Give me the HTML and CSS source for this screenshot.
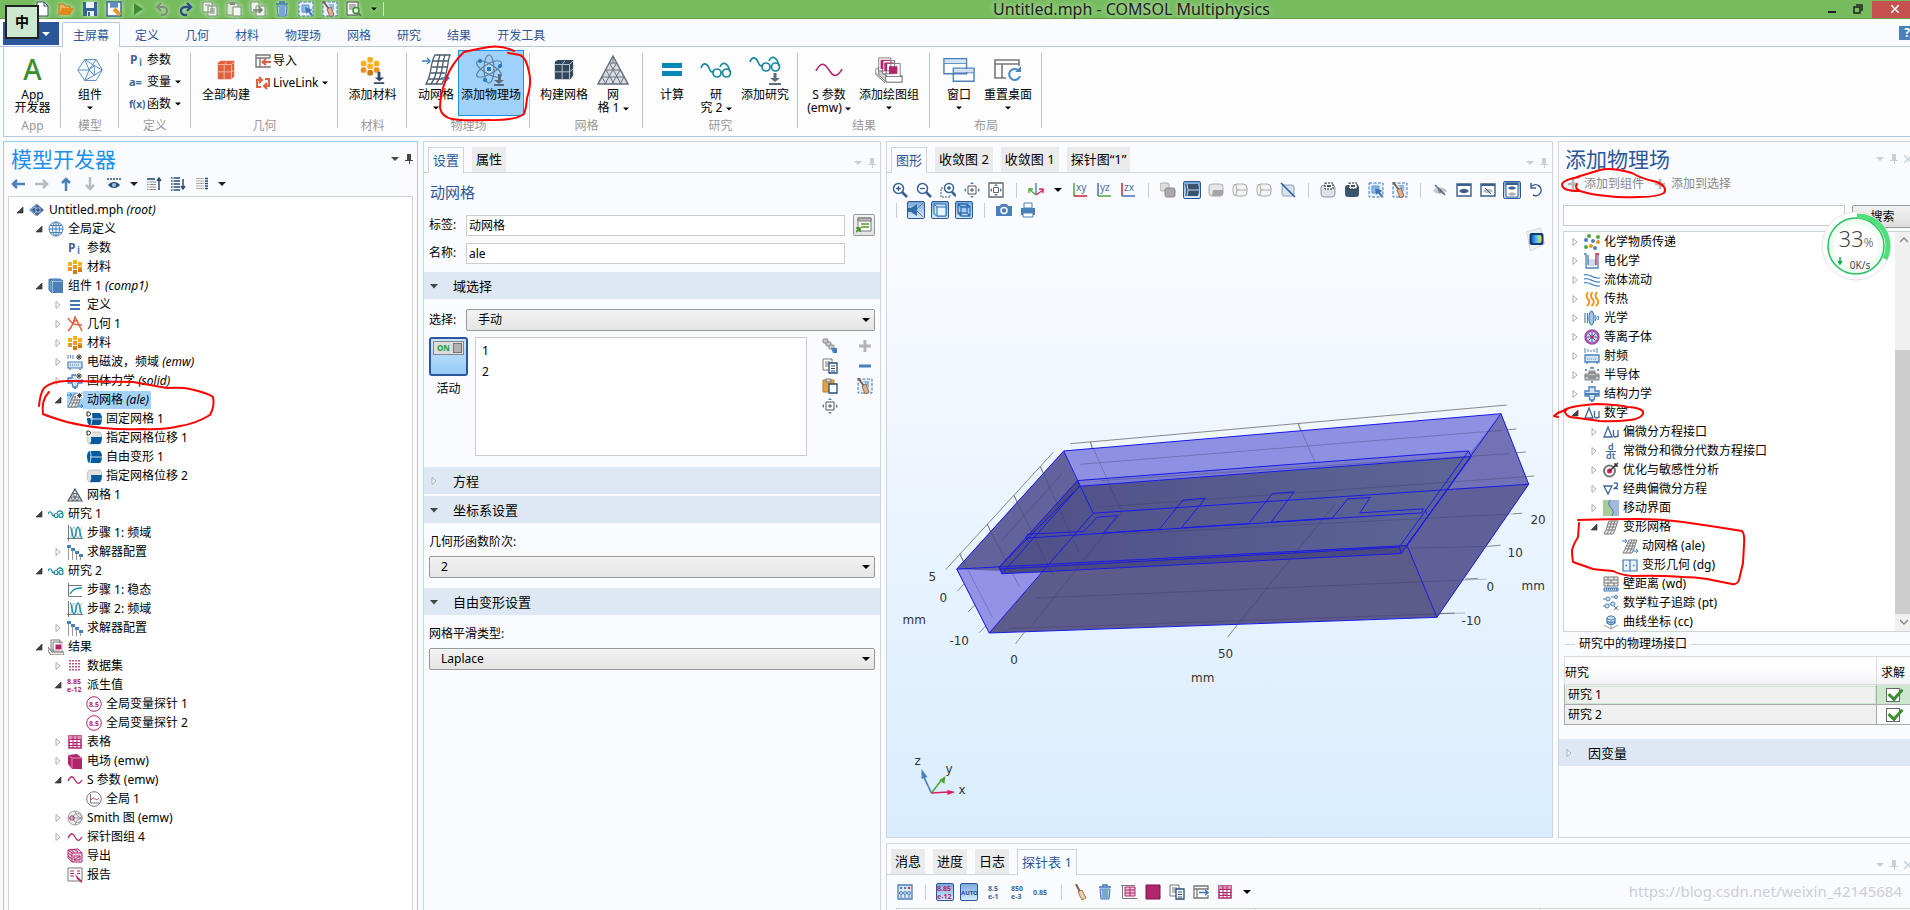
FILE: index.html
```html
<!DOCTYPE html>
<html lang="zh-CN">
<head>
<meta charset="utf-8">
<title>Untitled.mph - COMSOL Multiphysics</title>
<link rel="stylesheet" href="styles.css">
</head>
<body>
<svg class="sprite" aria-hidden="true">
  <!-- general -->
  <symbol id="caret" viewBox="0 0 8 8"><path d="M0 2h8L4 6z" fill="currentColor"/></symbol>
  <symbol id="pin" viewBox="0 0 8 10"><path d="M2 0h4v6h2v1H5v3H4V7H0V6h2z" fill="currentColor"/></symbol>
  <symbol id="cross" viewBox="0 0 8 8"><path d="M0 0l8 8M8 0L0 8" stroke="currentColor" stroke-width="1.5" fill="none"/></symbol>
  <symbol id="open" viewBox="0 0 12 12"><path d="M9 3v6H3z" fill="#444" stroke="#222" stroke-width=".6"/></symbol>
  <symbol id="shut" viewBox="0 0 12 12"><path d="M4 2.500v7l4-3.500z" fill="#fff" stroke="#aaa"/></symbol>
  <symbol id="down" viewBox="0 0 12 12"><path d="M2 4h8L6 8.500z" fill="#444"/></symbol>
  <symbol id="dl" viewBox="0 0 12 12"><path d="M4.500 0h3v5H11L6 9 1 5h3.500zM0 10h12v2H0z" fill="currentColor"/></symbol>
  <!-- quick access -->
  <symbol id="new" viewBox="0 0 16 16"><path d="M3 1h7l4 4v10H3z" fill="#fff" stroke="#35506f"/><path d="M10 1v4h4" fill="none" stroke="#35506f"/></symbol>
  <symbol id="folder" viewBox="0 0 16 16"><path d="M1 14V3h5l1 2h5v3" fill="#e8b25a" stroke="#b87414"/><path d="M1 14l3-7h12l-4 7z" fill="#e08a1e"/></symbol>
  <symbol id="save" viewBox="0 0 16 16"><path d="M1 1h14v14H1z" fill="#35649c"/><path d="M4 1h8v6H4zM5 10h7v5H5z" fill="#e9f1fa"/><path d="M6 11h2v4H6z" fill="#35649c"/></symbol>
  <symbol id="saveas" viewBox="0 0 16 16"><path d="M1 1h14v14H1z" fill="#fff" stroke="#35649c" stroke-width="1.500"/><path d="M4 2h8v5H4z" fill="#8fb4da"/><path d="M4 3h8M4 5h8" stroke="#35649c"/><path d="M8 8l6 6" stroke="#e39a2e" stroke-width="4"/></symbol>
  <symbol id="run" viewBox="0 0 16 16"><path d="M4 2v12l9-6z" fill="#3c8f30"/></symbol>
  <symbol id="undo" viewBox="0 0 16 16"><path d="M3 6h6a4 4 0 0 1 0 8H7M7 2L3 6l4 4" fill="none" stroke="#7d8c7d" stroke-width="2"/></symbol>
  <symbol id="redo" viewBox="0 0 16 16"><path d="M13 6H7a4 4 0 0 0 0 8h2M9 2l4 4-4 4" fill="none" stroke="#274e86" stroke-width="2.400"/></symbol>
  <symbol id="pages" viewBox="0 0 16 16"><path d="M1 1h9v10H1zM6 5h9v10H6z" fill="#eef6ea" stroke="#7f8f7a"/><path d="M8 8h5M8 10h5M8 12h5M3 4h5" stroke="#7f8f7a"/></symbol>
  <symbol id="pasteg" viewBox="0 0 16 16"><path d="M1 2h11v12H1z" fill="#dfe9da" stroke="#7f8f7a"/><path d="M4 1h5v3H4z" fill="#7f8f7a"/><path d="M7 6h8v9H7z" fill="#f4faf1" stroke="#7f8f7a"/></symbol>
  <symbol id="dup" viewBox="0 0 16 16"><path d="M1 1h8v10H1zM6 5h9v10H6z" fill="#eef6ea" stroke="#7f8f7a"/><path d="M3 9h9M9 6l3 3-3 3" fill="none" stroke="#6f7f6a" stroke-width="1.500"/></symbol>
  <symbol id="trash" viewBox="0 0 16 16"><path d="M2 3h12M6 3V1h4v2" fill="none" stroke="#3f76b5" stroke-width="1.500"/><path d="M3 5h10l-1 10H4z" fill="#b9d4ef" stroke="#3f76b5"/><path d="M6 6v8M8 6v8M10 6v8" stroke="#3f76b5"/></symbol>
  <symbol id="sel" viewBox="0 0 16 16"><path d="M1 1h14v14H1z" fill="#e9f2fb" stroke="#3f76b5" stroke-dasharray="3 1.500"/><path d="M4 4h7v7H4z" fill="#8bbbe6" stroke="#5b93cb"/><path d="M7 6l8 3-3 1 3 4-2 1-3-4-2 2z" fill="#3f76b5"/></symbol>
  <symbol id="desel" viewBox="0 0 16 16"><path d="M1 1h14v14H1z" fill="#e9f2fb" stroke="#3f76b5" stroke-dasharray="3 1.500"/><path d="M6 3h6v7z" fill="#8bbbe6"/><path d="M1 0l6 8" stroke="#7a6150" stroke-width="2"/><path d="M5 8l4-2 3 8-4 2z" fill="#e0b18d" stroke="#8b6a50"/></symbol>
  <symbol id="find" viewBox="0 0 16 16"><path d="M1 1h11v13H1z" fill="#fff" stroke="#444"/><path d="M3 4h7M3 6h7M3 8h4" stroke="#666"/><circle cx="10" cy="9.500" r="3" fill="#e3f5dc" stroke="#3c8f30" stroke-width="1.500"/><path d="M12 12l3 3" stroke="#3c8f30" stroke-width="2"/></symbol>
  <!-- ribbon large -->
  <symbol id="comp" viewBox="0 0 32 32"><path d="M2 16L10 4h13l7 12-7 12H10zM2 16h13l8-12M15 16L10 28M15 16L10 4M30 16l-9-5-6 5M30 16l-9 6-6-6M21 11L10 4M21 22L10 28M21 11V22" fill="#f2f8fe" stroke="#4a80ba"/></symbol>
  <symbol id="build" viewBox="0 0 24 24"><path d="M3 4l3-2h15v17l-3 3H3z" fill="#e0603f"/><path d="M3 6h15v16M3 14h15M10 6v16M18 6l3-3M18 14l3-2M10 6l3-3" stroke="#f6b9a6" fill="none"/></symbol>
  <symbol id="bmesh" viewBox="0 0 24 24"><path d="M2 3l3-2h17v17l-3 4H2z" fill="#33475b"/><path d="M2 6h16v16M2 14h16M10 6v16M18 6l4-4M18 14l4-3M10 6l3-4" stroke="#c2ccd6" fill="none"/></symbol>
  <symbol id="imp" viewBox="0 0 16 16"><path d="M15 13v1H1V2h14v3M1 5h14M5 5v9" fill="none" stroke="#777" stroke-width="1.400"/><path d="M16 9H9M11 6L7.500 9l3.500 3" fill="none" stroke="#e0603f" stroke-width="2"/></symbol>
  <symbol id="link" viewBox="0 0 16 16"><path d="M6 12H2V5h4M4 2l3 3-3 3M10 4h4v7h-4M12 8l-3 3 3 3" fill="none" stroke="#e0603f" stroke-width="2"/></symbol>
  <symbol id="mats" viewBox="0 0 16 16"><path d="M6 1h4v4H6zM1 3h4v4H1zM11 3h4v4h-4z" fill="#fbb01e"/><path d="M6 6h4v4H6zM1 8h4v4H1zM11 8h4v4h-4z" fill="#ee961d"/><path d="M6 11h4v4H6zM11 10h4v3h-4z" fill="#cf7a12"/></symbol>
  <symbol id="addmat" viewBox="0 0 28 30"><g fill="#fbb01e"><rect x="9" y="1" width="6" height="6" rx="2"/><rect x="2" y="5" width="6" height="6" rx="2"/><rect x="16" y="5" width="6" height="6" rx="2"/><rect x="9" y="8" width="6" height="6" rx="2"/></g><g fill="#f0921a"><rect x="2" y="12" width="6" height="6" rx="2"/><rect x="16" y="12" width="6" height="6" rx="2"/></g><rect x="9" y="15" width="6" height="6" rx="2" fill="#c97914"/><path d="M20 17h3v6h4l-5 4-5-4h3zM16 28h11v2H16z" fill="#2d4a63"/></symbol>
  <symbol id="ale" viewBox="0 0 28 32"><path d="M13 1h15c-3 6-1 16-8 29H4c7-12 3-18 9-29z" fill="#fff" stroke="#4a5a69" stroke-width="1.300"/><path d="M11 7h15M10 13h15M9 19h14M7 25h14M18 1c-4 10-1 18-9 29M23 1c-4 10-1 18-9 29" fill="none" stroke="#4a5a69" stroke-width="1.300"/><path d="M0 7h8M5 4l3 3-3 3M19 24h8M24 21l3 3-3 3" fill="none" stroke="#3b7fc4" stroke-width="1.300"/></symbol>
  <symbol id="atom" viewBox="0 0 32 32"><g fill="none" stroke="#5e7f9d" stroke-width="1.200"><ellipse cx="14" cy="15" rx="5" ry="14"/><ellipse cx="14" cy="15" rx="5" ry="14" transform="rotate(60 14 15)"/><ellipse cx="14" cy="15" rx="5" ry="14" transform="rotate(120 14 15)"/></g><circle cx="14" cy="15" r="3" fill="#1879c8" stroke="#fff"/><g fill="#1879c8"><circle cx="5" cy="7" r="2"/><circle cx="25" cy="12" r="2"/><circle cx="10" cy="26" r="2"/></g><path d="M23 20h3v6h3l-5 4-5-4h4zM19 30h10v2H19z" fill="#5b6b7b"/></symbol>
  <symbol id="tri" viewBox="0 0 32 30"><path d="M16 1l15 28H1z" fill="#d9dde1" stroke="#66717c" stroke-width="1.500"/><path d="M12.500 8h7M9 15h14M5 22h22M12.500 8L24 29M9 15l8 14M5 22l4 7M19.500 8L8 29M23 15l-8 14M27 22l-4 7M16 1v7" fill="none" stroke="#66717c"/></symbol>
  <symbol id="tri16" viewBox="0 0 16 16"><path d="M8 2l7 12H1z" fill="#d9dde1" stroke="#4d5964" stroke-width="1.200"/><path d="M5.500 6.500h5M3.500 10h9M5.500 6.500L10 14M3.500 10L6 14M10.500 6.500L6 14M12.500 10L10 14" fill="none" stroke="#4d5964" stroke-width=".8"/></symbol>
  <symbol id="eq" viewBox="0 0 20 14"><path d="M0 0h20v5H0zM0 8h20v5H0z" fill="#0089b5"/></symbol>
  <symbol id="gls" viewBox="0 0 32 18"><g fill="none" stroke="#17889b" stroke-width="1.700"><path d="M1 7c2-6 6-5 8 0s3 4 5 3M20 6c2-6 8-5 10 5"/><circle cx="17" cy="12" r="4"/><circle cx="26.500" cy="12" r="4"/></g></symbol>
  <symbol id="gls16" viewBox="0 0 16 16"><g fill="none" stroke="#17889b" stroke-width="1.200"><path d="M0 8c1-3 3-3 4 0s2 2 3 1M9 7c1-3 5-3 6 1"/><circle cx="8" cy="9.500" r="2"/><circle cx="13" cy="9.500" r="2"/></g></symbol>
  <symbol id="sine" viewBox="0 0 32 16"><path d="M1 9C7-2 11 0 16 8s9 9 15-1" fill="none" stroke="#b2256b" stroke-width="1.800"/></symbol>
  <symbol id="plots" viewBox="0 0 30 28"><path d="M0 14l4-3v8l8 8h17v-7H12L4 13M0 14v4l11 10" fill="#ccc" stroke="#777"/><g fill="#fff" stroke="#777"><path d="M4 1h13v14H4zM8 4h13v14H8zM12 7h15v15H12z"/></g><path d="M6 3h10v1H9v9H6zM10 6h10v1h-7v8h-3zM15 10h9v8h-9z" fill="#b2256b"/><path d="M11 21h18v6H12z" fill="#fff" stroke="#777"/></symbol>
  <symbol id="wins" viewBox="0 0 34 26"><path d="M1 1h24v16H1zM11 11h22v14H11z" fill="#fff" stroke="#4a80ba" stroke-width="1.500"/><path d="M2 2h22v3H2zM12 12h20v3H12z" fill="#d5e4f3"/><path d="M1 6h24M11 16h22" stroke="#4a80ba"/></symbol>
  <symbol id="reset" viewBox="0 0 28 24"><path d="M25 8V2H1v18h11M1 6h24M8 6v14" fill="#fff" stroke="#777" stroke-width="1.600"/><path d="M25 13a5.500 5.500 0 1 0 1 5" fill="none" stroke="#4a86c2" stroke-width="2"/><path d="M21 14h6V8z" fill="#4a86c2"/></symbol>
  <!-- tree toolbar -->
  <symbol id="left" viewBox="0 0 16 16"><path d="M15 8H3M7 4L3 8l4 4" fill="none" stroke="currentColor" stroke-width="2.500"/></symbol>
  <symbol id="right" viewBox="0 0 16 16"><path d="M1 8h12M9 4l4 4-4 4" fill="none" stroke="currentColor" stroke-width="2.500"/></symbol>
  <symbol id="up" viewBox="0 0 16 16"><path d="M8 15V3M4 7l4-4 4 4" fill="none" stroke="currentColor" stroke-width="2.500"/></symbol>
  <symbol id="dn" viewBox="0 0 16 16"><path d="M8 1v12M4 9l4 4 4-4" fill="none" stroke="currentColor" stroke-width="2.500"/></symbol>
  <symbol id="eyebar" viewBox="0 0 16 16"><path d="M1 3h14" stroke="#274e79" stroke-width="1.600" stroke-dasharray="2 1"/><path d="M2 9c3-4 9-4 12 0-3 4-9 4-12 0z" fill="#274e79"/><circle cx="8" cy="9" r="2" fill="#9cc4ea"/></symbol>
  <symbol id="listup" viewBox="0 0 16 16"><path d="M1 3h8" stroke="#274e79" stroke-width="1.600"/><path d="M1 6h9M1 8.500h9M1 11h9M1 13.500h9" stroke="#888" stroke-dasharray="1.500 1 8"/><path d="M13 14V3M11 5l2-3 2 3" fill="none" stroke="#274e79" stroke-width="1.500"/></symbol>
  <symbol id="listdn" viewBox="0 0 16 16"><path d="M1 2h9M1 5h9M1 8h9M1 11h9M1 14h9" stroke="#274e79" stroke-width="1.400" stroke-dasharray="1.500 1 8"/><path d="M13 3v10M11 10l2 3 2-3" fill="none" stroke="#274e79" stroke-width="1.500"/></symbol>
  <symbol id="listcol" viewBox="0 0 16 16"><path d="M2 2.500h8M2 5h8M2 7.500h8M2 10h8M2 12.500h8" stroke="#aaa" stroke-width="1.200"/><path d="M11 2.500h3M11 5h3M11 7.500h3M11 10h3M11 12.500h3" stroke="#274e79" stroke-width="1.500"/></symbol>
  <!-- tree -->
  <symbol id="root" viewBox="0 0 16 16"><path d="M1 8l7-6 7 6-7 6z" fill="#3f6496"/><path d="M0 8l7-6 1 1-5 5 5 5-1 1z" fill="#6f92bf"/><path d="M7 6h4v4H7zM7 6L5 5M7 10l-2 2" fill="#2f5080" stroke="#c9d9ec" stroke-width=".8"/></symbol>
  <symbol id="globe" viewBox="0 0 16 16"><g fill="#eef5fc" stroke="#4a80ba"><circle cx="8" cy="8" r="7"/><ellipse cx="8" cy="8" rx="3.500" ry="7"/><path d="M1 8h14M8 1v14M2 4.500h12M2 11.500h12"/></g></symbol>
  <symbol id="pi" viewBox="0 0 16 16"><text x="1" y="12" font-size="12" font-weight="700" fill="#3f6496">P</text><text x="10" y="14" font-size="10" font-weight="700" fill="#4a80ba">i</text></symbol>
  <symbol id="avar" viewBox="0 0 16 16"><text x="0" y="12" font-size="11" font-weight="700" fill="#3f6496">a=</text></symbol>
  <symbol id="fx" viewBox="0 0 16 16"><text x="0" y="12" font-size="10" font-weight="700" fill="#3f6496">f(x)</text></symbol>
  <symbol id="cube" viewBox="0 0 16 16"><path d="M1 1l3 3v11l-3-3zM2 1h10l3 2H5z" fill="#6b9bd0" stroke="#3f76b5"/><path d="M5 4h10v11H5z" fill="#4a80ba"/></symbol>
  <symbol id="defs3" viewBox="0 0 16 16"><path d="M3 4h10M3 8h10M3 12h10" stroke="#3f76b5" stroke-width="2"/></symbol>
  <symbol id="geom" viewBox="0 0 16 16"><path d="M1 2c4 7 8 7 14 7M1 15C5 11 7 6 8 1l7 14M6 5h5" fill="none" stroke="#e0603f" stroke-width="1.500"/></symbol>
  <symbol id="star" viewBox="0 0 16 16"><path d="M12 0v6M9 3h6M10 1l4 4M14 1l-4 4" stroke="#444"/></symbol>
  <symbol id="emw" viewBox="0 0 16 16"><path d="M1 1v4M3.500 1v3M6 1v4" stroke="#4a80ba"/><path d="M1 8h14v6H1zM3 14v2M13 14v2" fill="#d3e3f4" stroke="#4a80ba" stroke-width="1.200"/><path d="M3 11h10" stroke="#4a80ba" stroke-dasharray="1 1"/><path d="M12 0v6M9 3h6M10 1l4 4M14 1l-4 4" stroke="#444"/></symbol>
  <symbol id="struct" viewBox="0 0 16 16"><path d="M5 1h6v4h4v5h-4l-1 4H6l-1-4H1V5h4z" fill="#d3e3f4" stroke="#4a80ba" stroke-width="1.300"/><path d="M1 7h14v2H1zM7 14h2v2H7z" fill="#4a80ba"/></symbol>
  <symbol id="solid" viewBox="0 0 16 16"><path d="M5 2h5v3h5v5h-4l-1 4H6l-1-4H1V5h4z" fill="#d3e3f4" stroke="#4a80ba" stroke-width="1.300"/><path d="M1 7h14v2H1zM7 14h2v2H7z" fill="#4a80ba"/><path d="M9 0h7v6H9z" fill="#fff"/><path d="M12 0v6M9 3h6M10 1l4 4M14 1l-4 4" stroke="#444"/></symbol>
  <symbol id="dmesh" viewBox="0 0 16 16"><path d="M6 2h9c-2 4-2 8-5 13H1C4 10 4 6 6 2z" fill="#f2f2f2" stroke="#777"/><path d="M5 5h9M4 8h9M3 11h9M9 2C7 6 7 10 4 15M12 2c-2 4-2 8-5 13" fill="none" stroke="#777"/></symbol>
  <symbol id="amesh" viewBox="0 0 16 16"><path d="M7 2h8c-2 4-2 8-5 13H1C4 10 5 6 7 2z" fill="#f2f2f2" stroke="#777"/><path d="M6 5h8M5 8h8M3 11h9M10 2C8 6 7 10 4 15M12.500 2c-2 4-2 8-5 13" fill="none" stroke="#777"/><path d="M0 3h5M3 1l2 2-2 2M11 13h5M14 11l2 2-2 2" fill="none" stroke="#3b7fc4"/></symbol>
  <symbol id="amesh2" viewBox="0 0 16 16"><path d="M7 2h8c-2 4-2 8-5 13H1C4 10 5 6 7 2z" fill="#f2f2f2" stroke="#777"/><path d="M6 5h8M5 8h8M3 11h9M10 2C8 6 7 10 4 15M12.500 2c-2 4-2 8-5 13" fill="none" stroke="#777"/><path d="M0 3h5M3 1l2 2-2 2M11 14h5M14 12l2 2-2 2" fill="none" stroke="#3b7fc4"/><circle cx="12.500" cy="3.500" r="3.500" fill="#fff"/><path d="M12.500 1v5M10 3.500h5M10.500 1.500l4 4M14.500 1.500l-4 4" stroke="#444"/></symbol>
  <symbol id="cylb" viewBox="0 0 16 16"><path d="M3 2h11q2 2 2 6t-2 6H3Q1 12 1 8t2-6z" fill="#045a9a"/><path d="M4 8h12M4 2q2 3 0 12" fill="none" stroke="#cfe2f3"/></symbol>
  <symbol id="cylg" viewBox="0 0 16 16"><path d="M3 2h11q2 2 2 6t-2 6H3Q1 12 1 8t2-6z" fill="#e2e2e2" stroke="#aaa" stroke-width=".6"/><path d="M5 7h11q0 4-2 7H4q2-3 1-7z" fill="#045a9a"/></symbol>
  <symbol id="cylbd" viewBox="0 0 16 16"><path d="M3 2h11q2 2 2 6t-2 6H3Q1 12 1 8t2-6z" fill="#045a9a"/><path d="M4 8h12M5 2q2 3 0 12" fill="none" stroke="#cfe2f3"/><path d="M0 0h6v7H0z" fill="#fff"/><path d="M1 1h1.500q2 0 2 2t-2 2H1z" fill="none" stroke="#222"/></symbol>
  <symbol id="cylgd" viewBox="0 0 16 16"><path d="M3 2h11q2 2 2 6t-2 6H3Q1 12 1 8t2-6z" fill="#e2e2e2" stroke="#aaa" stroke-width=".6"/><path d="M5 7h11q0 4-2 7H4q2-3 1-7z" fill="#045a9a"/><path d="M0 0h6v7H0z" fill="#fff"/><path d="M1 1h1.500q2 0 2 2t-2 2H1z" fill="none" stroke="#222"/></symbol>
  <symbol id="freq" viewBox="0 0 16 16"><path d="M1.500 0v16M0 13.500h16" stroke="#777"/><path d="M3 13c2 0 2-11 4-11s2 11 4 11 2-11 4-11" fill="none" stroke="#9bb" stroke-width="1"/><path d="M3 2c2 0 2 11 4 11S9 2 11 2s2 11 4 11" fill="none" stroke="#1b91ab" stroke-width="1.400"/></symbol>
  <symbol id="stat" viewBox="0 0 16 16"><path d="M1.500 1v13.500H15M1 3.500h14" fill="none" stroke="#777"/><path d="M3 12c3-5 6-6 12-6" fill="none" stroke="#1b91ab" stroke-width="1.400"/></symbol>
  <symbol id="solver" viewBox="0 0 16 16"><path d="M1.500 3v13M5.500 5v11M9.500 8v8M13.500 11v5" stroke="#999"/><path d="M0 1h4v3H0zM4 4h4v3H4zM8 7h4v3H8zM12 10h4v3h-4z" fill="#4a80ba"/></symbol>
  <symbol id="res" viewBox="0 0 16 16"><path d="M3 1h9v10H3zM5 3h9v10H5z" fill="#fff" stroke="#777"/><path d="M0 8l4 5h12v3H3l-3-4z" fill="#e6e6e6" stroke="#777"/><path d="M7 5h7v6H7z" fill="#b2256b" stroke="#fff"/></symbol>
  <symbol id="dset" viewBox="0 0 16 16"><path d="M3 2v12M6 2v12M9 2v12M12 2v12" stroke="#b2256b" stroke-width="1.600" stroke-dasharray="1.500 1.500"/></symbol>
  <symbol id="deriv" viewBox="0 0 16 16"><text x="0" y="7" font-size="7" font-weight="700" fill="#b2256b">8.85</text><text x="0" y="15" font-size="7" font-weight="700" fill="#b2256b">e-12</text></symbol>
  <symbol id="probe" viewBox="0 0 16 16"><circle cx="8" cy="8" r="7.300" fill="#fff" stroke="#b2256b"/><text x="3" y="11" font-size="7" font-weight="700" fill="#b2256b">8.5</text></symbol>
  <symbol id="table" viewBox="0 0 16 16"><path d="M2 2h12v12H2z" fill="#fff" stroke="#b2256b" stroke-width="1.500"/><path d="M2 2h12v3H2zM6 8h4v3H6z" fill="#dc94b8"/><path d="M2 5.500h12M2 8.500h12M2 11.500h12M6 2v12M10 2v12" stroke="#b2256b"/></symbol>
  <symbol id="efield" viewBox="0 0 16 16"><path d="M1 2l9-1 5 4v11H5l-4-5z" fill="#b2256b"/><path d="M1 2l4 3h10M5 5v11" stroke="#e8a8c8" fill="none" stroke-width=".8"/></symbol>
  <symbol id="wave" viewBox="0 0 16 16"><path d="M1 9c3-6 5-5 7-1s4 5 7 0" fill="none" stroke="#b2256b" stroke-width="1.300"/></symbol>
  <symbol id="glob1" viewBox="0 0 16 16"><circle cx="8" cy="8" r="7.300" fill="#fff" stroke="#777"/><path d="M4.500 3v9H13" fill="none" stroke="#777"/><path d="M5 9c2-4 3-1 4-1s2 2 4-1" fill="none" stroke="#b2256b"/></symbol>
  <symbol id="smith" viewBox="0 0 16 16"><circle cx="8" cy="8" r="7" fill="#eee" stroke="#999"/><path d="M1 8h14M8 1q1 6 7 7M8 15q1-6 7-7" stroke="#999" fill="none"/><circle cx="10.500" cy="8" r="4.500" fill="none" stroke="#999"/><rect x="3" y="6" width="4" height="4" rx="1" fill="none" stroke="#b2256b"/></symbol>
  <symbol id="export" viewBox="0 0 16 16"><path d="M1 2l10-1 4 4v9H5l-4-4z" fill="#f4d7e5" stroke="#b2256b"/><path d="M1 2l4 3h10M5 5v9M3 1l4 3M7 1l4 3M1 5l4 3M1 8l4 3M7 8h6v4H7zM7 12l6-4" fill="none" stroke="#b2256b"/></symbol>
  <symbol id="report" viewBox="0 0 16 16"><path d="M1 1h14v13H1z" fill="#fff" stroke="#777"/><path d="M3 4h4M3 6.500h4M3 9h4M10 4h3M10 6.500h3" stroke="#b2256b" stroke-width="1.200"/><path d="M8 7l7 7v2l-5-4z" fill="#b2256b"/></symbol>
  <!-- settings -->
  <symbol id="help1" viewBox="0 0 16 16"><path d="M2 1h13v13H2z" fill="#fff" stroke="#777"/><path d="M2 1h13v3H2z" fill="#bbb" stroke="#777"/><path d="M5 7h8M5 10h8" stroke="#4c9a2a" stroke-width="1.300"/><path d="M0 15l3-3M0 11h4v4" fill="none" stroke="#3c8f30" stroke-width="1.600"/></symbol>
  <symbol id="chain" viewBox="0 0 16 16"><g stroke="#888" fill="#ccc"><rect x="1" y="1" width="5" height="4" rx="1"/><rect x="4" y="4" width="5" height="4" rx="1"/><rect x="7" y="7" width="5" height="4" rx="1"/></g><path d="M9 10h6v5h-4z" fill="#4a80ba"/></symbol>
  <symbol id="plus" viewBox="0 0 12 12"><path d="M6 0v12M0 6h12" stroke="#b5b5b5" stroke-width="3"/></symbol>
  <symbol id="minus" viewBox="0 0 12 12"><path d="M0 6h12" stroke="#4a80ba" stroke-width="3"/></symbol>
  <symbol id="copy" viewBox="0 0 16 16"><path d="M1 1h9v11H1z" fill="#fff" stroke="#777"/><path d="M3 4h5M3 6h5M3 8h5" stroke="#777"/><path d="M7 5h8v10H7z" fill="#fff" stroke="#274e79" stroke-width="1.300"/><path d="M9 8h4M9 10.500h4M9 13h4" stroke="#274e79"/></symbol>
  <symbol id="paste" viewBox="0 0 16 16"><path d="M1 2h11v12H1z" fill="#dea445" stroke="#b37e22"/><path d="M4 1h5v3H4z" fill="#ddd" stroke="#777"/><path d="M7 6h8v9H7z" fill="#fff" stroke="#274e79" stroke-width="1.300"/></symbol>
  <symbol id="zsel" viewBox="0 0 16 16"><path d="M4 4h8v8H4z" fill="#fff" stroke="#555"/><path d="M8 6v4M6 8h4" stroke="#555"/><path d="M8 0l2 2H6zM8 16l2-2H6zM0 8l2-2v4zM16 8l-2-2v4z" fill="#4a80ba"/></symbol>
  <!-- graphics -->
  <symbol id="zin" viewBox="0 0 16 16"><circle cx="6.500" cy="6.500" r="5" fill="#fff" stroke="#345f93" stroke-width="1.500"/><path d="M10 10l5 5" stroke="#345f93" stroke-width="2.500"/><path d="M6.500 4v5M4 6.500h5" stroke="#345f93" stroke-width="1.300"/></symbol>
  <symbol id="zout" viewBox="0 0 16 16"><circle cx="6.500" cy="6.500" r="5" fill="#fff" stroke="#345f93" stroke-width="1.500"/><path d="M10 10l5 5" stroke="#345f93" stroke-width="2.500"/><path d="M4 6.500h5" stroke="#345f93" stroke-width="1.300"/></symbol>
  <symbol id="zbox" viewBox="0 0 16 16"><path d="M3 6H1v9h9v-2" fill="none" stroke="#345f93" stroke-dasharray="2 1"/><circle cx="9" cy="6" r="4.500" fill="#fff" stroke="#345f93" stroke-width="1.500"/><path d="M12 10l4 4" stroke="#345f93" stroke-width="2.500"/><path d="M9 4v4M7 6h4" stroke="#345f93" stroke-width="1.300"/></symbol>
  <symbol id="zext" viewBox="0 0 16 16"><path d="M1 1h14v14H1z" fill="#fff" stroke="#666" stroke-width="1.300"/><path d="M5.500 5.500h5v5h-5z" fill="none" stroke="#666"/><path d="M8 2l2 2H6zM8 14l2-2H6zM2 8l2-2v4zM14 8l-2-2v4z" fill="#4a80ba"/></symbol>
  <symbol id="axes" viewBox="0 0 16 16"><path d="M8 13V1" stroke="#4a80ba" stroke-width="1.400"/><path d="M8 13L1 7M1 11V7h4" fill="none" stroke="#4ca83a" stroke-width="1.400"/><path d="M8 13l7-5M11 7h4v4" fill="none" stroke="#dc1e5a" stroke-width="1.400"/></symbol>
  <symbol id="xy" viewBox="0 0 16 16"><path d="M2 14V1" stroke="#4ca83a" stroke-width="1.500"/><path d="M2 14h13" stroke="#c02434" stroke-width="1.500"/><text x="4" y="9" font-size="10" fill="#4a6fa0">xy</text></symbol>
  <symbol id="yz" viewBox="0 0 16 16"><path d="M2 14V1" stroke="#3f6fb5" stroke-width="1.500"/><path d="M2 14h13" stroke="#4ca83a" stroke-width="1.500"/><text x="4" y="9" font-size="10" fill="#4a6fa0">yz</text></symbol>
  <symbol id="zx" viewBox="0 0 16 16"><path d="M2 14V1" stroke="#c02434" stroke-width="1.500"/><path d="M2 14h13" stroke="#3f6fb5" stroke-width="1.500"/><text x="4" y="9" font-size="10" fill="#4a6fa0">zx</text></symbol>
  <symbol id="cc" viewBox="0 0 16 16"><rect x="0" y="1" width="9" height="8" rx="2" fill="#dedede" stroke="#aaa"/><rect x="5" y="6" width="10" height="9" rx="2" fill="#aaa" stroke="#888"/></symbol>
  <symbol id="cdom" viewBox="0 0 16 16"><path d="M1 2h13q2 6 0 12H1q2-6 0-12z" fill="#3a5470"/><path d="M4 8h11M3 2q2 6 0 12" fill="none" stroke="#c3d5e8"/></symbol>
  <symbol id="cbnd" viewBox="0 0 16 16"><rect x="1" y="2" width="14" height="12" rx="3" fill="#e6e6e6" stroke="#aaa"/><path d="M5 8h10v4q0 2-2 2H4z" fill="#a5a5a5"/></symbol>
  <symbol id="cedg" viewBox="0 0 16 16"><rect x="1" y="2" width="14" height="12" rx="4" fill="#f4f4f4" stroke="#aaa"/><path d="M4 8h11M4 3q2 5 0 10" fill="none" stroke="#aaa"/></symbol>
  <symbol id="cno" viewBox="0 0 16 16"><rect x="2" y="3" width="12" height="11" rx="2" fill="#d8e1ea" stroke="#8ba0b5"/><path d="M1 1l14 14" stroke="#1b5c9e" stroke-width="1.500"/></symbol>
  <symbol id="csel" viewBox="0 0 16 16"><rect x="1" y="3" width="14" height="12" rx="3" fill="#dce2e8" stroke="#8a97a5"/><path d="M5 1h8v6H5z" fill="#fff" stroke="#222" stroke-dasharray="2 1"/><path d="M7 4h4" stroke="#3a5470" stroke-width="2"/></symbol>
  <symbol id="csel2" viewBox="0 0 16 16"><rect x="1" y="3" width="14" height="12" rx="3" fill="#3a5470"/><path d="M5 1h8v6H5z" fill="#fff" stroke="#222" stroke-dasharray="2 1"/><path d="M7 4h4" stroke="#3a5470" stroke-width="2"/></symbol>
  <symbol id="noeye" viewBox="0 0 16 16"><path d="M1 9c4-5 10-5 14 0-4 4-10 4-14 0z" fill="#c4c8cc"/><circle cx="8" cy="9" r="2" fill="#888"/><path d="M3 3l10 10" stroke="#456083" stroke-width="1.300"/></symbol>
  <symbol id="eyewin" viewBox="0 0 16 16"><path d="M1 2h14v12H1z" fill="#fff" stroke="#3a5f8c" stroke-width="1.400"/><path d="M1 2h14v2H1z" fill="#3a5f8c"/><path d="M3 9c3-3 7-3 10 0-3 3-7 3-10 0z" fill="#3a5f8c"/></symbol>
  <symbol id="noeyewin" viewBox="0 0 16 16"><path d="M1 2h14v12H1z" fill="#fff" stroke="#3a5f8c" stroke-width="1.400"/><path d="M1 2h14v2H1z" fill="#3a5f8c"/><path d="M3 9c3-3 7-3 10 0-3 3-7 3-10 0z" fill="#bbb"/><path d="M5 6l6 6" stroke="#3a5f8c"/></symbol>
  <symbol id="eyes" viewBox="0 0 16 16"><path d="M2 1h12v14H2z" fill="#fff" stroke="#3a5f8c"/><path d="M2 1h12v2H2z" fill="#3a5f8c"/><path d="M4 6c2-2 6-2 8 0-2 2-6 2-8 0z" fill="#3a5f8c"/><path d="M4 12c2-2 6-2 8 0-2 2-6 2-8 0z" fill="#aaa"/></symbol>
  <symbol id="rst" viewBox="0 0 16 16"><path d="M4 4a5.500 5.500 0 1 1 1 9M3 1v5h5" fill="none" stroke="#3a5f8c" stroke-width="1.500"/></symbol>
  <symbol id="light" viewBox="0 0 16 16"><path d="M0 6h3l6-4v12l-6-4H0z" fill="#2f6ead"/><path d="M9 7l6-6M9 9l6 6" stroke="#777"/></symbol>
  <symbol id="transp" viewBox="0 0 16 16"><path d="M2 2h11l1 1v11H5L2 12z" fill="#cfe4f8" stroke="#2f6ead"/><path d="M5 5h9v9H5zM2 2l3 3" fill="#e9f4fe" stroke="#2f6ead"/></symbol>
  <symbol id="wire" viewBox="0 0 16 16"><path d="M2 2h9v9H2zM5 5h9v9H5zM2 2l3 3M11 2l3 3M2 11l3 3M11 11l3 3" fill="none" stroke="#2f6ead" stroke-width="1.300"/></symbol>
  <symbol id="cam" viewBox="0 0 16 16"><path d="M0 4h4l1-2h6l1 2h4v10H0z" fill="#4a80ba"/><circle cx="8" cy="8.500" r="3" fill="none" stroke="#fff" stroke-width="1.500"/></symbol>
  <symbol id="print" viewBox="0 0 16 16"><path d="M4 1h8v5H4z" fill="#fff" stroke="#4a80ba"/><path d="M1 6h14v7H1z" fill="#4a80ba"/><path d="M3 11h10v4H3z" fill="#fff" stroke="#4a80ba"/></symbol>
  <!-- physics -->
  <symbol id="chem" viewBox="0 0 16 16"><g fill="#4ca83a"><circle cx="5" cy="2" r="2"/><circle cx="14" cy="3" r="2"/><circle cx="2" cy="13" r="2"/></g><g fill="#4a80ba"><circle cx="2" cy="6" r="2"/><circle cx="9" cy="7" r="2"/><circle cx="11" cy="14" r="2"/></g><g fill="#f0921a"><circle cx="14" cy="8" r="2"/><circle cx="7" cy="12" r="2"/></g></symbol>
  <symbol id="echem" viewBox="0 0 16 16"><path d="M0 1h2v14h12V1" fill="#fff" stroke="#4a80ba" stroke-width="1.300"/><path d="M4 6h8v7H4z" fill="#ccdcee"/><path d="M4 2v10" stroke="#4a80ba" stroke-width="1.400"/><path d="M12 12V1h3" fill="none" stroke="#d0213b" stroke-width="1.400"/></symbol>
  <symbol id="flow" viewBox="0 0 16 16"><path d="M0 3c6-2 8 4 16 3M0 7c6-2 8 4 16 3M0 11c6-2 8 4 16 3" fill="none" stroke="#4a86c2" stroke-width="1.200"/></symbol>
  <symbol id="heat" viewBox="0 0 16 16"><path d="M4 1q-3 4 0 7t-1 7M8.500 1q-3 4 0 7t-1 7M13 1q-3 4 0 7t-1 7" fill="none" stroke="#f0921a" stroke-width="1.800"/></symbol>
  <symbol id="optic" viewBox="0 0 16 16"><path d="M1 3v10M3.500 3v10M11 5q2 3 0 6M13.500 6q2 2 0 4" fill="none" stroke="#4a80ba" stroke-width="1.200"/><ellipse cx="7.500" cy="8" rx="2.500" ry="7" fill="#9cc7ec" stroke="#2f6ead"/></symbol>
  <symbol id="plasma" viewBox="0 0 16 16"><circle cx="8" cy="8" r="6.500" fill="#cfd7f0" stroke="#a653a5" stroke-width="2.500"/><path d="M8 3v10M3 8h10M4.500 4.500l7 7M11.500 4.500l-7 7" stroke="#4a60b0"/><circle cx="8" cy="8" r="1.500" fill="#d0213b"/></symbol>
  <symbol id="rf" viewBox="0 0 16 16"><path d="M1 0v5M4 1v3M7 2v2M10 1v3M13 0v5" stroke="#4a80ba"/><path d="M1 7h14v7H1zM3 14v2M13 14v2" fill="#d3e3f4" stroke="#4a80ba" stroke-width="1.300"/><path d="M3 11h10" stroke="#4a80ba" stroke-dasharray="1 1"/></symbol>
  <symbol id="semi" viewBox="0 0 16 16"><path d="M5 4h6v3h4v6H1V7h4z" fill="#c9cdd1" stroke="#777"/><path d="M1 9h14M4 11h8M5 6h6" stroke="#555"/><path d="M1 3h2M13 3h2M6 1h4M7 15h2" stroke="#3f76b5" stroke-width="1.600"/></symbol>
  <symbol id="du" viewBox="0 0 16 16"><path d="M1 13L5 3l4 10z" fill="none" stroke="#3f6496" stroke-width="1.300"/><path d="M10.500 6v5q0 2 2 2t2.500-2V6v7" fill="none" stroke="#3f6496" stroke-width="1.300"/></symbol>
  <symbol id="ddt" viewBox="0 0 16 16"><text x="5" y="7" font-size="9" font-weight="600" fill="#3f6496">d</text><path d="M3 8.500h10" stroke="#3f6496"/><text x="3" y="16" font-size="9" font-weight="600" fill="#3f6496">dt</text></symbol>
  <symbol id="opt" viewBox="0 0 16 16"><circle cx="6.500" cy="9" r="5.500" fill="#fff" stroke="#777" stroke-width="2"/><circle cx="6.500" cy="9" r="2.500" fill="#dc1e5a"/><path d="M6.500 9L15 1M12 1v3h3" fill="none" stroke="#333" stroke-width="1.300"/></symbol>
  <symbol id="nab" viewBox="0 0 16 16"><path d="M1 5h8l-4 8z" fill="none" stroke="#3f6496" stroke-width="1.300"/><path d="M10.500 2.500q4-1.500 4 1t-4 4H15" fill="none" stroke="#3f6496" stroke-width="1.300"/></symbol>
  <symbol id="move" viewBox="0 0 16 16"><path d="M0 0h7q-3 4 1 8t1 8H0z" fill="#a7cc96"/><path d="M7 0q-3 4 1 8t1 8h7V0z" fill="#a4b7dc"/><path d="M7 0q-3 4 1 8t1 8" fill="none" stroke="#3f76b5"/></symbol>
  <symbol id="dg" viewBox="0 0 16 16"><path d="M1 3h14v11H1zM8 3v11" fill="#eaf3fb" stroke="#3f76b5" stroke-width="1.200"/><path d="M3.500 8.500H5M11 8.500h1.500" stroke="#3f76b5" stroke-width="1.500"/></symbol>
  <symbol id="wall" viewBox="0 0 16 16"><path d="M1 1h14v9H1zM1 4h14M1 7h14M5 1v3M11 1v3M8 4v3M5 7v3M11 7v3" fill="#eee" stroke="#777"/><path d="M1 12h14v3H1z" fill="#cfe0f2" stroke="#3f76b5"/><path d="M3 13h11" stroke="#3f76b5" stroke-width="2" stroke-dasharray="1 1"/></symbol>
  <symbol id="ptrace" viewBox="0 0 16 16"><g fill="#d8e8f7" stroke="#4a80ba"><circle cx="5" cy="4" r="2"/><circle cx="13" cy="2" r="1.500"/><circle cx="4" cy="11" r="2"/><circle cx="10" cy="9" r="2"/></g><path d="M0 4h3M8 2h4M0 11h2M6 9h2M11 11l4 4M15 11l-4 4" stroke="#4a80ba"/></symbol>
  <symbol id="curv" viewBox="0 0 16 16"><path d="M8 15L1 11M8 15l7-4M8 15V1" stroke="#999" fill="none"/><ellipse cx="8" cy="4" rx="4" ry="2" fill="#cfe0f2" stroke="#4a80ba"/><path d="M4 4v5q4 3 8 0V4M4 7q4 3 8 0" fill="none" stroke="#4a80ba" stroke-width="1.300"/></symbol>
  <!-- probe table -->
  <symbol id="prec" viewBox="0 0 16 16"><path d="M1 1h14v14H1z" fill="#dbe6f1" stroke="#4a80ba" stroke-width="1.300"/><path d="M3 4h2M7 4h2" stroke="#4a80ba" stroke-width="2"/><path d="M11 4h2" stroke="#d0213b" stroke-width="2"/><g fill="none" stroke="#4a80ba"><circle cx="4" cy="9" r="1.500"/><circle cx="8" cy="9" r="1.500"/><circle cx="12" cy="9" r="1.500"/><path d="M4 11v3M8 11v3M12 11v3"/></g></symbol>
  <symbol id="auto" viewBox="0 0 16 16"><text x="0" y="11" font-size="6" font-weight="700" fill="#1f4f8f">AUTO</text></symbol>
  <symbol id="n85" viewBox="0 0 16 16"><text x="3" y="7" font-size="7" font-weight="700" fill="#3f6496">8.5</text><text x="3" y="15" font-size="7" font-weight="700" fill="#3f6496">e-1</text></symbol>
  <symbol id="n850" viewBox="0 0 16 16"><text x="2" y="7" font-size="7" font-weight="700" fill="#3f6496">850</text><text x="2" y="15" font-size="7" font-weight="700" fill="#3f6496">e-3</text></symbol>
  <symbol id="n085" viewBox="0 0 16 16"><text x="0" y="11" font-size="7" font-weight="700" fill="#3f6496">0.85</text></symbol>
  <symbol id="broom" viewBox="0 0 16 16"><path d="M3 0l4 8" stroke="#7a6150" stroke-width="2"/><path d="M5 8l4-2 4 8-4 2z" fill="#f0cba8" stroke="#a07850"/></symbol>
  <symbol id="tplot" viewBox="0 0 16 16"><path d="M1.500 1v13.500H16M0 1.500h14" fill="none" stroke="#777"/><path d="M4 3h10v9H4zM4 6h10M4 9h10M9 3v9" fill="#f0c4da" stroke="#b2256b"/></symbol>
  <symbol id="tsurf" viewBox="0 0 16 16"><path d="M1 1h14v14H1z" fill="#b2256b" stroke="#7d1549"/></symbol>
  <symbol id="texp" viewBox="0 0 16 16"><path d="M15 6V2H1v12h14v-3M1 5h14M4 5v9" fill="#fff" stroke="#777" stroke-width="1.300"/><path d="M6 8.500h9M12 6l3 2.500L12 11" fill="none" stroke="#3f76b5" stroke-width="1.500"/></symbol>
</svg>

<div class="app">
  <header class="titlebar">
    <div class="quick">
      <button aria-label="新建"><svg><use href="#new"/></svg></button><button aria-label="打开"><svg><use href="#folder"/></svg></button><button aria-label="保存"><svg><use href="#save"/></svg></button><button aria-label="另存为"><svg><use href="#saveas"/></svg></button><button aria-label="运行"><svg><use href="#run"/></svg></button><button aria-label="撤消"><svg><use href="#undo"/></svg></button><button aria-label="重做"><svg><use href="#redo"/></svg></button><button aria-label="复制"><svg><use href="#pages"/></svg></button><button aria-label="粘贴"><svg><use href="#pasteg"/></svg></button><button aria-label="生成副本"><svg><use href="#dup"/></svg></button><button aria-label="删除"><svg><use href="#trash"/></svg></button><button aria-label="选择"><svg><use href="#sel"/></svg></button><button aria-label="清除选择"><svg><use href="#desel"/></svg></button><button aria-label="查找"><svg><use href="#find"/></svg></button><button class="slim" aria-label="更多"><svg class="s8"><use href="#caret"/></svg></button>
      <span class="qsep"></span>
    </div>
    <h1 class="doc">Untitled.mph - COMSOL Multiphysics</h1>
    <div class="winbtns">
      <button aria-label="最小化"><span class="min"></span></button>
      <button aria-label="还原"><svg class="s10" viewBox="0 0 10 10"><path d="M1 3h6v6H1zM3 1h6v6" fill="none" stroke="#222" stroke-width="1.500"/></svg></button>
      <button class="close" aria-label="关闭"><svg class="s8"><use href="#cross"/></svg></button>
    </div>
  </header>
  <div class="ime">中</div>

  <nav class="tabs">
    <button class="file" aria-label="文件"><svg class="s8"><use href="#caret"/></svg></button>
    <a href="#" class="on">主屏幕</a><a href="#">定义</a><a href="#">几何</a><a href="#">材料</a><a href="#">物理场</a><a href="#">网格</a><a href="#">研究</a><a href="#">结果</a><a href="#">开发工具</a>
    <button class="q">?</button>
  </nav>

  <section class="ribbon">
    <div class="grp w57"><div class="body">
      <button class="big"><span class="ico bigA">A</span><span>App<br>开发器</span></button></div><h2>App</h2></div>
    <div class="grp w58"><div class="body">
      <button class="big"><span class="ico"><svg class="i28"><use href="#comp"/></svg></span><span>组件</span><svg class="s6"><use href="#caret"/></svg></button></div><h2>模型</h2></div>
    <div class="grp w72"><div class="body list">
      <button><svg><use href="#pi"/></svg>参数</button>
      <button><svg><use href="#avar"/></svg>变量<svg class="s6"><use href="#caret"/></svg></button>
      <button><svg><use href="#fx"/></svg>函数<svg class="s6"><use href="#caret"/></svg></button></div><h2>定义</h2></div>
    <div class="grp w147"><div class="body start">
      <button class="big b56"><span class="ico"><svg class="i22"><use href="#build"/></svg></span><span>全部构建</span></button>
      <div class="list tight"><button><svg><use href="#imp"/></svg>导入</button><button><svg><use href="#link"/></svg>LiveLink<svg class="s6"><use href="#caret"/></svg></button></div></div><h2>几何</h2></div>
    <div class="grp w69"><div class="body">
      <button class="big"><span class="ico"><svg class="i28"><use href="#addmat"/></svg></span><span>添加材料</span></button></div><h2>材料</h2></div>
    <div class="grp w123"><div class="body start">
      <button class="big b44"><span class="ico"><svg class="i32"><use href="#ale"/></svg></span><span>动网格</span><svg class="s6"><use href="#caret"/></svg></button>
      <button class="big b66 active"><span class="ico"><svg class="i32"><use href="#atom"/></svg></span><span>添加物理场</span>
        <svg class="mark markphys" viewBox="0 0 96 80"><path d="M76 6Q64 0 51 2T26 7Q14 18 8 34T2 63Q4 72 14 74T50 75Q76 76 86 69Q88 64 89 53Q94 38 91 27Q88 12 82 10L70 8"/></svg></button></div><h2>物理场</h2></div>
    <div class="grp w113"><div class="body start">
      <button class="big b60"><span class="ico"><svg class="i22"><use href="#bmesh"/></svg></span><span>构建网格</span></button>
      <button class="big b38"><span class="ico"><svg class="i32"><use href="#tri"/></svg></span><span>网<br>格 1 <svg class="s6"><use href="#caret"/></svg></span></button></div><h2>网格</h2></div>
    <div class="grp w155"><div class="body start">
      <button class="big b44"><span class="ico"><svg class="i20"><use href="#eq"/></svg></span><span>计算</span></button>
      <button class="big b44"><span class="ico"><svg class="i32"><use href="#gls"/></svg></span><span>研<br>究 2 <svg class="s6"><use href="#caret"/></svg></span></button>
      <button class="big b54"><span class="ico col"><svg class="gl"><use href="#gls"/></svg><svg class="dl"><use href="#dl"/></svg></span><span>添加研究</span></button></div><h2>研究</h2></div>
    <div class="grp w132"><div class="body start">
      <button class="big b48"><span class="ico"><svg class="i28"><use href="#sine"/></svg></span><span>S 参数<br>(emw) <svg class="s6"><use href="#caret"/></svg></span></button>
      <button class="big b66"><span class="ico"><svg class="i28"><use href="#plots"/></svg></span><span>添加绘图组</span><svg class="s6"><use href="#caret"/></svg></button></div><h2>结果</h2></div>
    <div class="grp w112"><div class="body start">
      <button class="big b44"><span class="ico"><svg class="i32"><use href="#wins"/></svg></span><span>窗口</span><svg class="s6"><use href="#caret"/></svg></button>
      <button class="big b54"><span class="ico"><svg class="i28"><use href="#reset"/></svg></span><span>重置桌面</span><svg class="s6"><use href="#caret"/></svg></button></div><h2>布局</h2></div>
  </section>

  <main class="work">
    <section class="panel model">
      <div class="phead"><h2>模型开发器</h2><span class="ctl"><svg class="s8"><use href="#caret"/></svg><svg class="pin"><use href="#pin"/></svg></span></div>
      <div class="ttools">
        <button class="blue" aria-label="上一个"><svg><use href="#left"/></svg></button><button class="dim" aria-label="下一个"><svg><use href="#right"/></svg></button><button class="blue" aria-label="上移"><svg><use href="#up"/></svg></button><button class="dim" aria-label="下移"><svg><use href="#dn"/></svg></button><button aria-label="显示"><svg><use href="#eyebar"/></svg></button><button class="slim" aria-label="显示选项"><svg class="s8"><use href="#caret"/></svg></button><button aria-label="折叠"><svg><use href="#listup"/></svg></button><button aria-label="展开"><svg><use href="#listdn"/></svg></button><button aria-label="列"><svg><use href="#listcol"/></svg></button><button class="slim" aria-label="列选项"><svg class="s8"><use href="#caret"/></svg></button>
      </div>
      <ul class="tree grow">
        <li class="l0"><button class="tw" aria-label="折叠"><svg><use href="#open"/></svg></button><svg><use href="#root"/></svg><span>Untitled.mph <i>(root)</i></span></li>
        <li class="l1"><button class="tw" aria-label="折叠"><svg><use href="#open"/></svg></button><svg><use href="#globe"/></svg><span>全局定义</span></li>
        <li class="l2"><span class="tw"></span><svg><use href="#pi"/></svg><span>参数</span></li>
        <li class="l2"><span class="tw"></span><svg><use href="#mats"/></svg><span>材料</span></li>
        <li class="l1"><button class="tw" aria-label="折叠"><svg><use href="#open"/></svg></button><svg><use href="#cube"/></svg><span>组件 1 <i>(comp1)</i></span></li>
        <li class="l2"><button class="tw" aria-label="展开"><svg><use href="#shut"/></svg></button><svg><use href="#defs3"/></svg><span>定义</span></li>
        <li class="l2"><button class="tw" aria-label="展开"><svg><use href="#shut"/></svg></button><svg><use href="#geom"/></svg><span>几何 1</span></li>
        <li class="l2"><button class="tw" aria-label="展开"><svg><use href="#shut"/></svg></button><svg><use href="#mats"/></svg><span>材料</span></li>
        <li class="l2"><button class="tw" aria-label="展开"><svg><use href="#shut"/></svg></button><svg><use href="#emw"/></svg><span>电磁波，频域 <i>(emw)</i></span></li>
        <li class="l2"><button class="tw" aria-label="展开"><svg><use href="#shut"/></svg></button><svg><use href="#solid"/></svg><span>固体力学 <i>(solid)</i></span></li>
        <li class="l2 sel"><button class="tw" aria-label="折叠"><svg><use href="#open"/></svg></button><svg><use href="#amesh2"/></svg><span>动网格 <i>(ale)</i></span></li>
        <li class="l3"><span class="tw"></span><svg><use href="#cylbd"/></svg><span>固定网格 1</span></li>
        <li class="l3"><span class="tw"></span><svg><use href="#cylgd"/></svg><span>指定网格位移 1</span></li>
        <li class="l3"><span class="tw"></span><svg><use href="#cylb"/></svg><span>自由变形 1</span></li>
        <li class="l3"><span class="tw"></span><svg><use href="#cylg"/></svg><span>指定网格位移 2</span></li>
        <li class="l2"><span class="tw"></span><svg><use href="#tri16"/></svg><span>网格 1</span></li>
        <li class="l1"><button class="tw" aria-label="折叠"><svg><use href="#open"/></svg></button><svg><use href="#gls16"/></svg><span>研究 1</span></li>
        <li class="l2"><span class="tw"></span><svg><use href="#freq"/></svg><span>步骤 1: 频域</span></li>
        <li class="l2"><button class="tw" aria-label="展开"><svg><use href="#shut"/></svg></button><svg><use href="#solver"/></svg><span>求解器配置</span></li>
        <li class="l1"><button class="tw" aria-label="折叠"><svg><use href="#open"/></svg></button><svg><use href="#gls16"/></svg><span>研究 2</span></li>
        <li class="l2"><span class="tw"></span><svg><use href="#stat"/></svg><span>步骤 1: 稳态</span></li>
        <li class="l2"><span class="tw"></span><svg><use href="#freq"/></svg><span>步骤 2: 频域</span></li>
        <li class="l2"><button class="tw" aria-label="展开"><svg><use href="#shut"/></svg></button><svg><use href="#solver"/></svg><span>求解器配置</span></li>
        <li class="l1"><button class="tw" aria-label="折叠"><svg><use href="#open"/></svg></button><svg><use href="#res"/></svg><span>结果</span></li>
        <li class="l2"><button class="tw" aria-label="展开"><svg><use href="#shut"/></svg></button><svg><use href="#dset"/></svg><span>数据集</span></li>
        <li class="l2"><button class="tw" aria-label="折叠"><svg><use href="#open"/></svg></button><svg><use href="#deriv"/></svg><span>派生值</span></li>
        <li class="l3"><span class="tw"></span><svg><use href="#probe"/></svg><span>全局变量探针 1</span></li>
        <li class="l3"><span class="tw"></span><svg><use href="#probe"/></svg><span>全局变量探针 2</span></li>
        <li class="l2"><button class="tw" aria-label="展开"><svg><use href="#shut"/></svg></button><svg><use href="#table"/></svg><span>表格</span></li>
        <li class="l2"><button class="tw" aria-label="展开"><svg><use href="#shut"/></svg></button><svg><use href="#efield"/></svg><span>电场 (emw)</span></li>
        <li class="l2"><button class="tw" aria-label="折叠"><svg><use href="#open"/></svg></button><svg><use href="#wave"/></svg><span>S 参数 (emw)</span></li>
        <li class="l3"><span class="tw"></span><svg><use href="#glob1"/></svg><span>全局 1</span></li>
        <li class="l2"><button class="tw" aria-label="展开"><svg><use href="#shut"/></svg></button><svg><use href="#smith"/></svg><span>Smith 图 (emw)</span></li>
        <li class="l2"><button class="tw" aria-label="展开"><svg><use href="#shut"/></svg></button><svg><use href="#wave"/></svg><span>探针图组 4</span></li>
        <li class="l2"><span class="tw"></span><svg><use href="#export"/></svg><span>导出</span></li>
        <li class="l2"><span class="tw"></span><svg><use href="#report"/></svg><span>报告</span></li>
      </ul>
      <svg class="mark marktree" viewBox="4 142 230 300"><path d="M39 406Q40 394 44 388Q52 381 67 381L133 382L167 388Q182 387 190 389Q208 393 213 397Q215 406 210 415Q195 424 180 426Q163 430 143 429Q123 430 103 428Q83 426 67 422Q50 417 43 414Q41 400 49 392"/></svg>
    </section>

    <section class="panel settings">
      <div class="ptabs"><button class="on">设置</button><button>属性</button><span class="ctl pale"><svg class="s8"><use href="#caret"/></svg><svg class="pin"><use href="#pin"/></svg></span></div>
      <h3 class="node">动网格</h3>
      <div class="frow"><label for="lab">标签:</label><input id="lab" type="text" value="动网格"><button class="hbtn" aria-label="说明"><svg><use href="#help1"/></svg></button></div>
      <div class="frow"><label for="nam">名称:</label><input id="nam" type="text" value="ale"><span class="hgap"></span></div>
      <button class="sect first"><svg><use href="#down"/></svg>域选择</button>
      <div class="frow selrow"><label for="selby">选择:</label><span class="dd"><select id="selby"><option>手动</option></select><svg class="s8"><use href="#caret"/></svg></span></div>
      <div class="domain">
        <div class="onoff"><button class="tog" aria-label="活动"><span class="sw">ON<b></b></span></button><span>活动</span></div>
        <ul class="lbox"><li>1</li><li>2</li></ul>
        <div class="side">
          <button aria-label="创建选择"><svg><use href="#chain"/></svg></button><button aria-label="添加"><svg class="s12"><use href="#plus"/></svg></button>
          <button aria-label="复制选择"><svg><use href="#copy"/></svg></button><button aria-label="移除"><svg class="s12"><use href="#minus"/></svg></button>
          <button aria-label="粘贴选择"><svg><use href="#paste"/></svg></button><button aria-label="清除"><svg><use href="#desel"/></svg></button>
          <button aria-label="缩放到选择"><svg><use href="#zsel"/></svg></button>
        </div>
      </div>
      <button class="sect"><svg><use href="#shut"/></svg>方程</button>
      <button class="sect next"><svg><use href="#down"/></svg>坐标系设置</button>
      <div class="stack"><label for="ord">几何形函数阶次:</label><span class="dd"><select id="ord"><option>2</option></select><svg class="s8"><use href="#caret"/></svg></span></div>
      <button class="sect"><svg><use href="#down"/></svg>自由变形设置</button>
      <div class="stack"><label for="smo">网格平滑类型:</label><span class="dd"><select id="smo"><option>Laplace</option></select><svg class="s8"><use href="#caret"/></svg></span></div>
    </section>

    <section class="panel graphics">
      <div class="ptabs"><button class="on">图形</button><button>收敛图 2</button><button>收敛图 1</button><button>探针图“1”</button><span class="ctl pale"><svg class="s8"><use href="#caret"/></svg><svg class="pin"><use href="#pin"/></svg></span></div>
      <div class="gtools">
        <button aria-label="放大"><svg><use href="#zin"/></svg></button><button aria-label="缩小"><svg><use href="#zout"/></svg></button><button aria-label="框选缩放"><svg><use href="#zbox"/></svg></button><button aria-label="缩放到选择"><svg><use href="#zsel"/></svg></button><button aria-label="缩放到窗口"><svg><use href="#zext"/></svg></button><span class="sep"></span>
        <button aria-label="默认视图"><svg><use href="#axes"/></svg></button><button class="slim" aria-label="视图选项"><svg class="s8"><use href="#caret"/></svg></button><button aria-label="xy 视图"><svg><use href="#xy"/></svg></button><button aria-label="yz 视图"><svg><use href="#yz"/></svg></button><button aria-label="zx 视图"><svg><use href="#zx"/></svg></button><span class="sep"></span>
        <button aria-label="选择对象"><svg><use href="#cc"/></svg></button><button aria-label="选择域" class="press"><svg><use href="#cdom"/></svg></button><button aria-label="选择边界"><svg><use href="#cbnd"/></svg></button><button aria-label="选择边"><svg><use href="#cedg"/></svg></button><button aria-label="选择点"><svg><use href="#cedg"/></svg></button><button aria-label="不选择"><svg><use href="#cno"/></svg></button><span class="sep"></span>
        <button aria-label="框选"><svg><use href="#csel"/></svg></button><button aria-label="框选实体"><svg><use href="#csel2"/></svg></button><button aria-label="选择框"><svg><use href="#sel"/></svg></button><button aria-label="取消选择"><svg><use href="#desel"/></svg></button><span class="sep"></span>
        <button aria-label="隐藏"><svg><use href="#noeye"/></svg></button><button aria-label="仅显示"><svg><use href="#eyewin"/></svg></button><button aria-label="仅隐藏"><svg><use href="#noeyewin"/></svg></button><button aria-label="全部显示" class="press"><svg><use href="#eyes"/></svg></button><button aria-label="重置隐藏"><svg><use href="#rst"/></svg></button><span class="sep"></span>
        <button class="press" aria-label="场景光"><svg><use href="#light"/></svg></button><button class="press" aria-label="透明"><svg><use href="#transp"/></svg></button><button class="press" aria-label="线框"><svg><use href="#wire"/></svg></button><span class="sep"></span><button aria-label="快照"><svg><use href="#cam"/></svg></button><button aria-label="打印"><svg><use href="#print"/></svg></button>
      </div>
      <div class="canvas">
        <svg class="scene" viewBox="887 221 665 616">
          <defs>
            <linearGradient id="sun" x1="0" y1="0" x2="1" y2="0"><stop offset="0" stop-color="#1559c9"/><stop offset=".5" stop-color="#4dc3e8"/><stop offset="1" stop-color="#ffe14a"/></linearGradient>
            <linearGradient id="pcb" x1="0" y1="0" x2="1" y2="0"><stop offset="0" stop-color="#504f88"/><stop offset="1" stop-color="#5c6696"/></linearGradient>
          </defs>
          <g><path d="M1527 231l14-4 4 16-14 7z" fill="#f1f1f1" stroke="#d8d8d8"/><rect x="1530" y="232" width="14" height="12" rx="2" fill="#123a78"/><rect x="1532" y="234" width="10" height="8" rx="2" fill="url(#sun)"/></g>
          <svg x="880" y="380" width="680" height="430" viewBox="0 0 1568 1290" preserveAspectRatio="none" class="box">
            <g class="axis"><path d="M439 189L1446 73M485 184l7 40M965 129l7 30M399 215L151 567M178 632l15-22M202 695l22-30M228 757l22-30M312 790l35-60M802 770l24-40M1436 149l32-4M1452 219l38-5M1492 288l18-2M1460 400l22-2M1400 498l32-4M1350 596l29-2M1285 700l41-2M369 258l10 30M308 344l10 28M246 430l12 34M183 520l10 28"/></g>
            <path d="M423 211L1433 99l64 212-212 400L251 758 176 566z" fill="#5c5b8a"/>
            <path d="M423 211L491 398 251 758 176 566z" fill="#64629c"/>
            <path d="M176 566l75 192 121-181z" fill="#9392e6"/>
            <path d="M423 211L1433 99l-69 129L460 317z" fill="#8e90e2"/>
            <path d="M1433 99l64 212-202 16z" fill="#7372b6"/>
            <path d="M1295 327l202-16-212 400-69-216z" fill="#605f98"/>
            <path d="M455 300L1358 211l6 17L1203 519 280 580l-6-20z" fill="#4b4a7e"/>
            <path d="M460 317L1364 228 1215 494 274 560z" fill="url(#pcb)"/>
            <path d="M460 317L455 300 1358 211l6 17z" fill="#7b7cd0"/>
            <g class="grid"><path d="M485 184l70 205M965 129l38 115M462 251L1436 149M420 278L280 480M510 300L1452 219M500 380l992-92M1460 400l-900 60M357 653L1400 596M295 745L1350 698M350 735L560 390M826 730L1050 370M1216 503l184-5M369 258l90 260M308 344l90 240M246 430l75 190M183 520l75 190"/></g>
            <g class="edge"><path d="M423 211L1433 99l64 212-212 400L251 758 176 566zM423 211l68 187L251 758M491 398l1006-87M1433 99L1216 495l69 216M1216 495L176 566"/>
            <path d="M455 300L1358 211l6 17L1203 519 280 580l-6-20zM460 317L1364 228M455 300l5 17-186 243M460 317L280 580M1358 211L1198 500l5 19M1198 500L274 566M1364 228L1215 494M340 461l130-8 30-43 48-5-34 53 130-12 54-87 52-6-55 89 155-13 55-90 50-5-53 91 142-13 35-57 52-4-24 46 147-12-4 12L335 473zM335 473l10 14M1258 388l4 14"/></g>
          </svg>
          <g class="lab"><text x="928" y="581">5</text><text x="939" y="602">0</text><text x="902" y="624">mm</text><text x="949" y="645">-10</text><text x="1010" y="664">0</text><text x="1218" y="658">50</text><text x="1191" y="682">mm</text><text x="1462" y="625">-10</text><text x="1487" y="591">0</text><text x="1522" y="590">mm</text><text x="1508" y="557">10</text><text x="1531" y="524">20</text></g>
          <g fill="none" stroke-width="1.600"><path d="M931 793l-8-17" stroke="#4a80ba"/><path d="M931 793l10-13" stroke="#4ca83a"/><path d="M931 793l17-1" stroke="#dc1e5a"/></g>
          <path d="M921 769l6 8-6 2z" fill="#4a80ba"/><path d="M945 776l-1 8-5-4z" fill="#4ca83a"/><path d="M955 792l-8 3v-5z" fill="#dc1e5a"/>
          <g class="lab"><text x="914" y="765">z</text><text x="945" y="773">y</text><text x="958" y="794">x</text></g>
        </svg>
      </div>
    </section>

    <section class="panel physics">
      <div class="phead"><h2>添加物理场</h2><span class="ctl pale"><svg class="s8"><use href="#caret"/></svg><svg class="pin"><use href="#pin"/></svg><svg class="s8"><use href="#cross"/></svg></span></div>
      <div class="adds"><button><svg class="s10"><use href="#plus"/></svg>添加到组件</button><button><svg class="s10"><use href="#plus"/></svg>添加到选择</button></div>
      <div class="search"><input type="text" aria-label="搜索物理场"><button>搜索</button></div>
      <div class="treewrap">
        <ul class="tree">
          <li class="l0"><button class="tw" aria-label="展开"><svg><use href="#shut"/></svg></button><svg><use href="#chem"/></svg><span>化学物质传递</span></li>
          <li class="l0"><button class="tw" aria-label="展开"><svg><use href="#shut"/></svg></button><svg><use href="#echem"/></svg><span>电化学</span></li>
          <li class="l0"><button class="tw" aria-label="展开"><svg><use href="#shut"/></svg></button><svg><use href="#flow"/></svg><span>流体流动</span></li>
          <li class="l0"><button class="tw" aria-label="展开"><svg><use href="#shut"/></svg></button><svg><use href="#heat"/></svg><span>传热</span></li>
          <li class="l0"><button class="tw" aria-label="展开"><svg><use href="#shut"/></svg></button><svg><use href="#optic"/></svg><span>光学</span></li>
          <li class="l0"><button class="tw" aria-label="展开"><svg><use href="#shut"/></svg></button><svg><use href="#plasma"/></svg><span>等离子体</span></li>
          <li class="l0"><button class="tw" aria-label="展开"><svg><use href="#shut"/></svg></button><svg><use href="#rf"/></svg><span>射频</span></li>
          <li class="l0"><button class="tw" aria-label="展开"><svg><use href="#shut"/></svg></button><svg><use href="#semi"/></svg><span>半导体</span></li>
          <li class="l0"><button class="tw" aria-label="展开"><svg><use href="#shut"/></svg></button><svg><use href="#struct"/></svg><span>结构力学</span></li>
          <li class="l0"><button class="tw" aria-label="折叠"><svg><use href="#open"/></svg></button><svg><use href="#du"/></svg><span>数学</span></li>
          <li class="l1"><button class="tw" aria-label="展开"><svg><use href="#shut"/></svg></button><svg><use href="#du"/></svg><span>偏微分方程接口</span></li>
          <li class="l1"><button class="tw" aria-label="展开"><svg><use href="#shut"/></svg></button><svg><use href="#ddt"/></svg><span>常微分和微分代数方程接口</span></li>
          <li class="l1"><button class="tw" aria-label="展开"><svg><use href="#shut"/></svg></button><svg><use href="#opt"/></svg><span>优化与敏感性分析</span></li>
          <li class="l1"><button class="tw" aria-label="展开"><svg><use href="#shut"/></svg></button><svg><use href="#nab"/></svg><span>经典偏微分方程</span></li>
          <li class="l1"><button class="tw" aria-label="展开"><svg><use href="#shut"/></svg></button><svg><use href="#move"/></svg><span>移动界面</span></li>
          <li class="l1"><button class="tw" aria-label="折叠"><svg><use href="#open"/></svg></button><svg><use href="#dmesh"/></svg><span>变形网格</span></li>
          <li class="l2"><span class="tw"></span><svg><use href="#amesh"/></svg><span>动网格 (ale)</span></li>
          <li class="l2"><span class="tw"></span><svg><use href="#dg"/></svg><span>变形几何 (dg)</span></li>
          <li class="l1"><span class="tw"></span><svg><use href="#wall"/></svg><span>壁距离 (wd)</span></li>
          <li class="l1"><span class="tw"></span><svg><use href="#ptrace"/></svg><span>数学粒子追踪 (pt)</span></li>
          <li class="l1"><span class="tw"></span><svg><use href="#curv"/></svg><span>曲线坐标 (cc)</span></li>
        </ul>
        <div class="sbar"><svg class="s8" viewBox="0 0 8 8"><path d="M0 6l4-4 4 4" fill="none" stroke="#888" stroke-width="1.500"/></svg><span class="thumb"></span><svg class="s8" viewBox="0 0 8 8"><path d="M0 2l4 4 4-4" fill="none" stroke="#888" stroke-width="1.500"/></svg></div>
      </div>
      <h3 class="legend">研究中的物理场接口</h3>
      <table class="studies">
        <thead><tr><th>研究</th><th>求解</th></tr></thead>
        <tbody>
          <tr class="cur"><td>研究 1</td><td><input type="checkbox" aria-label="求解研究 1" checked></td></tr>
          <tr><td>研究 2</td><td><input type="checkbox" aria-label="求解研究 2" checked></td></tr>
        </tbody>
      </table>
      <button class="sect dep"><svg><use href="#shut"/></svg>因变量</button>
      <svg class="mark markphy" viewBox="1559 142 340 460"><path d="M1577 177L1600 170Q1611 167 1632 173Q1642 179 1657 182Q1668 187 1664 193Q1657 197 1639 197Q1620 198 1607 196Q1592 195 1580 191Q1574 188 1577 184M1579 177Q1562 180 1562 185Q1563 191 1579 191"/><path d="M1554 416Q1558 412 1563 411Q1568 406 1597 404Q1622 405 1627 407Q1645 408 1643 414Q1640 419 1630 420Q1612 422 1600 421L1570 417Q1562 413 1567 409M1554 416l4 1"/><path d="M1578 520Q1607 519 1637 519Q1661 519 1683 522L1717 527Q1736 530 1742 531Q1745 534 1744 545L1743 563L1739 580Q1737 585 1732 584L1707 579Q1695 577 1683 577Q1656 575 1633 576Q1620 575 1613 571Q1600 570 1593 569L1573 562Q1572 556 1572 550Q1574 543 1578 537L1579 523"/></svg>
      <div class="net">
        <svg viewBox="0 0 70 70"><circle cx="35" cy="35" r="34" fill="#fff" stroke="#e4e4e4"/><circle cx="35" cy="35" r="28" fill="#eefcf2" stroke="#21c25e" stroke-width="1.500"/><circle cx="35" cy="35" r="22" fill="#fff"/><path d="M36 5a30 30 0 0 1 28 43" fill="none" stroke="#4fe07a" stroke-width="5"/><path d="M19 46v6M17 50l2 3 2-3" fill="none" stroke="#12a84a" stroke-width="1.500"/></svg>
        <p class="pct">33<small>%</small></p><p class="rate">0K/s</p>
      </div>
    </section>

    <section class="panel probe">
      <div class="ptabs"><button>消息</button><button>进度</button><button>日志</button><button class="on">探针表 1</button><span class="ctl pale"><svg class="s8"><use href="#caret"/></svg><svg class="pin"><use href="#pin"/></svg><svg class="s8"><use href="#cross"/></svg></span></div>
      <div class="gtools ptools">
        <button aria-label="精度"><svg><use href="#prec"/></svg></button><span class="sep"></span>
        <button class="press" aria-label="完整精度"><svg><use href="#deriv"/></svg></button><button class="press" aria-label="自动记数"><svg><use href="#auto"/></svg></button><button aria-label="科学记数"><svg><use href="#n85"/></svg></button><button aria-label="工程记数"><svg><use href="#n850"/></svg></button><button aria-label="小数记数"><svg><use href="#n085"/></svg></button><span class="sep"></span>
        <button aria-label="清除表格"><svg><use href="#broom"/></svg></button><button aria-label="删除表格"><svg><use href="#trash"/></svg></button><button aria-label="表格图"><svg><use href="#tplot"/></svg></button><button aria-label="表格面"><svg><use href="#tsurf"/></svg></button><button aria-label="复制表格"><svg><use href="#copy"/></svg></button><button aria-label="导出表格"><svg><use href="#texp"/></svg></button><button aria-label="显示表格"><svg><use href="#table"/></svg></button><button class="slim" aria-label="表格选项"><svg class="s8"><use href="#caret"/></svg></button>
      </div>
      <div class="ptable"><span></span><span></span><span></span></div>
      <p class="water">https://blog.csdn.net/weixin_42145684</p>
    </section>
  </main>
</div>
</body>
</html>
```
FILE: styles.css
```css
* { box-sizing: border-box; }
html, body { margin: 0; height: 100%; overflow: hidden; }
body, button, input, select { font: 12px/16px "Noto Sans", "Noto Sans CJK SC", sans-serif; color: #000; }
h1, h2, h3, p, ul { margin: 0; padding: 0; font-weight: 400; }
ul { list-style: none; }
button { padding: 0; border: 0; background: none; }
svg { display: block; flex: none; width: 16px; height: 16px; }
.sprite { display: none; }
.s6 { width: 6px; height: 6px; }
.s8 { width: 8px; height: 8px; }
.s10 { width: 10px; height: 10px; }
.s12 { width: 12px; height: 12px; }
.i20 { width: 20px; height: 14px; }
.i22 { width: 22px; height: 22px; }
.i28 { width: 28px; height: 28px; }
.i32 { width: 32px; height: 32px; }

/* the window is slightly wider than the viewport and is cut at the right */
.app { display: flex; flex-direction: column; width: calc(100% + 10px); height: 100%; background: #fafbff; position: relative; }

.titlebar { display: flex; align-items: center; height: 19px; flex: none; background: #76bc5f; border-bottom: 1px solid #5f9f4a; }
.quick { display: flex; align-items: center; padding-left: 30px; flex: none; }
.quick button { width: 24px; height: 18px; display: flex; align-items: center; justify-content: center; }
.quick svg { filter: drop-shadow(0 0 2px #d5efc9); }
.quick .slim { width: 16px; }
.quick .slim svg { width: 6px; height: 6px; }
.qsep { width: 1px; height: 14px; background: #cfe6c5; margin-left: 1px; }
.doc { flex: 1; font-size: 16px; line-height: 18px; color: #222; text-shadow: 0 0 5px #d5efc9; text-align: center; padding-left: 60px; }
.winbtns { flex: none; display: flex; justify-content: flex-end; }
.winbtns button { width: 26px; height: 17px; display: flex; align-items: center; justify-content: center; }
.winbtns .close { width: 45px; background: #c75050; color: #fff; margin: 0 3px 0 1px; }
.min { width: 8px; height: 2px; background: #222; margin-top: 6px; }
.ime { position: absolute; left: 5px; top: 5px; z-index: 3; width: 34px; height: 34px; border: 2px solid #222; background: #cce8cf; font-size: 14px; line-height: 30px; font-weight: 700; text-align: center; }

.tabs { display: flex; align-items: flex-end; height: 28px; flex: none; padding: 0 0 0 3px; border-bottom: 1px solid #b4c7dc; }
.tabs a { padding: 0 13px; line-height: 27px; height: 24px; color: #2b579a; text-decoration: none; }
.tabs .file { width: 56px; height: 23px; background: #2b579a; color: #fff; margin: 0 3px 1px 0; display: flex; align-items: center; padding-left: 39px; }
.tabs .on { padding: 0 10px; border: 1px solid #b4c7dc; border-bottom: 0; border-radius: 2px 2px 0 0; background: #fff; margin: 0 2px -1px 0; height: 25px; line-height: 26px; }
.q { margin: 0 5px 6px auto; width: 16px; height: 14px; background: #4a80ba; color: #fff; line-height: 14px; font-weight: 700; }

.ribbon { display: flex; height: 90px; flex: none; border-bottom: 1px solid #b4c7dc; border-left: 1px solid #b4c7dc; margin-left: 3px; background: #fdfdfe; }
.grp { display: flex; flex-direction: column; position: relative; height: 89px; }
.grp::after { content: ""; position: absolute; right: 0; top: 6px; width: 1px; height: 75px; background: #b4c7dc; }
.grp h2 { text-align: center; color: #999; font-size: 12px; height: 18px; line-height: 16px; }
.body { display: flex; justify-content: center; height: 71px; padding-top: 3px; }
.start { justify-content: flex-start; padding-left: 7px; }
.w57 { width: 57px; } .w58 { width: 58px; } .w72 { width: 72px; } .w147 { width: 147px; } .w69 { width: 69px; }
.w123 { width: 123px; } .w113 { width: 113px; } .w155 { width: 155px; } .w132 { width: 132px; } .w112 { width: 112px; }
.b38 { width: 38px; } .b44 { width: 44px; } .b48 { width: 48px; } .b54 { width: 54px; } .b56 { width: 56px; } .b60 { width: 60px; } .b66 { width: 66px; }
.w113 .start { padding-left: 4px; }
.w132 .b66 { margin-left: 3px; }
.big { display: flex; flex-direction: column; align-items: center; height: 66px; line-height: 13px; white-space: nowrap; position: relative; border: 1px solid transparent; padding: 0; flex: none; }
.big > .s6 { margin-top: 4px; }
.big span .s6 { display: inline-block; vertical-align: middle; }
.ico { height: 37px; display: flex; align-items: center; justify-content: center; }
.col { flex-direction: column; align-items: flex-end; }
.gl { width: 32px; height: 18px; }
.dl { width: 12px; height: 12px; color: #5b6b7b; }
.bigA { font-size: 28px; color: #3c8f30; font-weight: 500; }
.active { background: #9fd1fb; border-color: #1b90e8; }
.list { display: flex; flex-direction: column; justify-content: flex-start; align-items: flex-start; padding: 2px 0 0 10px; }
.list button { height: 22px; display: flex; align-items: center; gap: 2px; white-space: nowrap; }
.list .s6 { margin-left: 2px; }
.tight { padding: 0 0 0 1px; }

.mark { position: absolute; overflow: visible; pointer-events: none; z-index: 2; }
.mark path { fill: none; stroke: #f00; stroke-width: 2; stroke-linecap: round; stroke-linejoin: round; }
.markphys { left: -21px; top: -6px; width: 96px; height: 80px; }
.marktree { left: 0; top: 0; width: 230px; height: 300px; }
.markphy { left: 0; top: 0; width: 340px; height: 460px; }

.work { flex: 1; min-height: 0; display: grid; grid-template-columns: 415px 458px minmax(0, 1fr) 359px; grid-template-rows: minmax(0, 1fr) 67px; gap: 5px; padding: 4px 3px 0; }
.panel { border: 1px solid #cfd3da; display: flex; flex-direction: column; position: relative; min-height: 0; min-width: 0; background: #fafbff; }
.model { grid-row: 1 / 3; border-color: #99cdf7; border-bottom: 0; padding: 0 4px; }
.settings { grid-row: 1 / 3; border-bottom: 0; }
.probe { grid-column: 3 / 5; border-bottom: 0; }

.phead { display: flex; justify-content: space-between; align-items: center; height: 34px; padding: 0 0 0 3px; flex: none; }
.phead h2 { font-size: 21px; line-height: 32px; color: #1b90e8; }
.physics .phead { padding: 0 4px 0 6px; }
.physics .phead h2 { color: #2b579a; }
.ctl { display: flex; align-items: center; gap: 6px; color: #444; }
.pin { width: 8px; height: 10px; }
.pale { color: #c9cfd9; }
.ttools { display: flex; height: 20px; flex: none; align-items: flex-start; margin-left: -2px; }
.ttools button { width: 24px; height: 16px; display: flex; justify-content: center; align-items: center; color: #222; }
.ttools .blue { color: #4a80ba; }
.ttools .dim { color: #b8bcc2; }
.ttools .slim { width: 16px; }

.tree { border: 1px solid #cfd3da; background: #fff; }
.grow { flex: 1; min-height: 0; overflow: hidden; padding-top: 3px; border-bottom: 0; }
.tree li { display: flex; align-items: center; height: 19px; white-space: nowrap; padding-left: 5px; }
.tree .l1 { padding-left: 24px; }
.tree .l2 { padding-left: 43px; }
.tree .l3 { padding-left: 62px; }
.tree li > span:last-child { padding: 1px 2px; margin-left: 2px; }
.tw { width: 12px; height: 12px; margin-right: 3px; flex: none; }
.tw svg { width: 12px; height: 12px; }
.sel > svg { background: #a3d3fa; }
.tree .sel > span:last-child { background: #a3d3fa; margin-left: 0; padding-left: 4px; }

.ptabs { display: flex; align-items: flex-end; gap: 8px; height: 31px; flex: none; padding: 0 4px; border-bottom: 1px solid #cfd3da; font-size: 13px; }
.ptabs button { font-size: 13px; background: #ebebeb; height: 25px; padding: 0 4px; line-height: 25px; }
.ptabs .on { background: #fafbff; border: 1px solid #cfd3da; border-bottom: 0; color: #2b579a; height: 26px; margin-bottom: -1px; }
.ptabs .ctl { margin: 0 0 4px auto; }

.node { font-size: 15px; line-height: 20px; color: #2b579a; padding: 9px 6px 12px; }
.frow { display: flex; align-items: center; height: 22px; padding: 0 5px; margin-bottom: 6px; }
.frow label { width: 37px; flex: none; }
.frow input, .search input { flex: 1; min-width: 0; height: 21px; border: 1px solid #ccc; background: #fff; padding: 0 2px; }
.hbtn, .hgap { width: 22px; height: 22px; margin-left: 8px; flex: none; }
.hbtn { border: 1px solid #999; border-radius: 2px; background: linear-gradient(#f3f3f3, #e4e4e4); display: flex; align-items: center; justify-content: center; }
.sect { display: flex; align-items: center; width: 100%; height: 27px; flex: none; background: #dee8f4; font-size: 13px; padding-left: 4px; }
.sect svg { width: 12px; height: 12px; margin-right: 13px; }
.first { margin: 2px 0 10px; }
.next { margin-top: 2px; }
.dd { position: relative; flex: 1; display: block; }
.dd select { appearance: none; width: 100%; height: 22px; display: block; border: 1px solid #999; border-radius: 2px; background: linear-gradient(#f2f2f2, #e5e5e5); padding: 0 11px; }
.dd svg { position: absolute; right: 5px; top: 7px; pointer-events: none; }
.stack { padding: 11px 5px 10px; }
.stack label { display: block; height: 22px; line-height: 16px; }
.domain { display: flex; padding: 0 5px; margin-bottom: 11px; }
.onoff { width: 46px; }
.onoff > span { display: block; width: 39px; text-align: center; line-height: 26px; }
.tog { display: block; width: 39px; height: 39px; border: 2px solid #2b579a; border-radius: 3px; background: linear-gradient(#c9e5fd, #97cbf8); padding: 2px; }
.sw { display: flex; justify-content: space-between; align-items: center; height: 14px; border: 1px solid #888; background: #ddd; color: #1f9a3c; font-size: 8px; font-weight: 700; padding: 0 1px 0 3px; margin-bottom: 17px; }
.sw b { width: 9px; height: 10px; border: 1px solid #777; background: #b3b3b3; }
.lbox { flex: 1; height: 119px; border: 1px solid #ccc; background: #fff; padding: 2px 6px; line-height: 21px; }
.side { display: grid; grid-template-columns: 35px 35px; grid-auto-rows: 20px; padding-left: 5px; width: 68px; margin-top: -1px; }
.side button { display: flex; justify-content: center; align-items: center; }

.graphics { background: linear-gradient(#fafbff 12%, #d9edff); }
.graphics .ptabs { background: #fafbff; }
.gtools { display: flex; flex-wrap: wrap; align-content: flex-start; padding: 7px 0 2px 1px; flex: none; background: #fafbff; }
.gtools button { width: 24px; height: 20px; display: flex; justify-content: center; align-items: center; }
.gtools .slim { width: 20px; }
.sep { width: 16px; height: 20px; display: flex; justify-content: center; align-items: center; }
.sep::before { content: ""; width: 1px; height: 15px; background: #ccc; }
.gtools .press { width: 18px; height: 18px; margin: 1px 3px; border: 1px solid #2b579a; border-radius: 2px; background: linear-gradient(#7aa9dd, #d5eafe); }
.press svg { width: 16px; height: 16px; }
.canvas { flex: 1; min-height: 0; }
.scene { width: 100%; height: 100%; }
.box { overflow: visible; width: 680px; height: 430px; }
.box path { vector-effect: non-scaling-stroke; }
.axis path { fill: none; stroke: #888; }
.grid path { fill: none; stroke: #33325c; stroke-opacity: .3; }
.edge path { fill: none; stroke: #1a1aee; }
.lab { font-family: "DejaVu Sans", sans-serif; font-size: 12px; fill: #333; }

.adds { display: flex; gap: 11px; height: 16px; padding-left: 9px; flex: none; }
.adds button { color: #888; display: flex; align-items: center; gap: 6px; }
.search { display: flex; padding: 13px 3px 0 4px; gap: 7px; height: 39px; flex: none; }
.search button { width: 61px; height: 23px; border: 1px solid #999; border-radius: 2px; background: linear-gradient(#f2f2f2, #dedede); }
.treewrap { display: flex; border: 1px solid #cfd3da; background: #fff; margin: 0 3px 0 4px; flex: none; }
.treewrap .tree { flex: 1; border: 0; }
.sbar { width: 17px; background: #f0f0f0; display: flex; flex-direction: column; align-items: center; justify-content: space-between; padding: 4px 0 5px; }
.thumb { width: 17px; flex: 1; background: #cdcdcd; margin: 106px 0 4px; }
.legend { display: flex; align-items: center; gap: 4px; line-height: 20px; padding: 0 3px 0 6px; font-size: 12px; margin: 2px 0; }
.legend::before { content: ""; width: 10px; height: 1px; background: #cfd3da; }
.legend::after { content: ""; flex: 1; height: 1px; background: #cfd3da; }
.studies { border-collapse: collapse; margin: 0 3px 0 5px; border: 1px solid #bbb; table-layout: fixed; }
.studies th { height: 28px; text-align: left; font-weight: 400; padding: 5px 0 0; background: linear-gradient(#fff 40%, #f1f2f5); border: 1px solid #ddd; }
.studies th:last-child { width: 36px; padding-left: 4px; }
.studies td { height: 20px; padding: 0 3px; background: #f0f0f0; border: 1px solid #aaa; }
.studies td:last-child { background: #fafbff; padding-left: 9px; }
.studies .cur td { outline: 1px solid #cce8cf; outline-offset: -2px; }
.studies .cur td:last-child { background: #cce8cf; }
.studies input { appearance: none; display: block; width: 14px; height: 14px; margin: 0; border: 1px solid #666; background: #fff; position: relative; }
.studies input:checked::after { content: ""; position: absolute; left: 4px; top: -3px; width: 6px; height: 11px; border: solid #3c8f30; border-width: 0 3px 3px 0; transform: rotate(42deg); }
.dep { margin-top: 14px; }

.net { position: absolute; right: 25px; top: 69px; width: 70px; height: 70px; z-index: 3; }
.net svg { position: absolute; inset: 0; width: 70px; height: 70px; }
.net p { position: relative; text-align: center; }
.pct { font-size: 22px; line-height: 24px; padding-top: 15px; color: #444; font-weight: 300; }
.pct small { font-size: 12px; }
.rate { font-size: 10px; line-height: 14px; padding: 3px 0 0 8px; color: #444; }

.ptools { padding: 7px 0 6px 6px; flex-wrap: nowrap; }
.ptable { display: flex; flex: 1; margin: 0 3px 0 9px; border: 1px solid #cfd3da; min-height: 3px; background: #fff; }
.ptable span { width: 285px; border-right: 1px solid #ddd; }
.ptable span:first-child { width: 74px; }
.water { position: absolute; right: 14px; top: 37px; font-size: 15px; line-height: 20px; color: #cbced6; }
```
